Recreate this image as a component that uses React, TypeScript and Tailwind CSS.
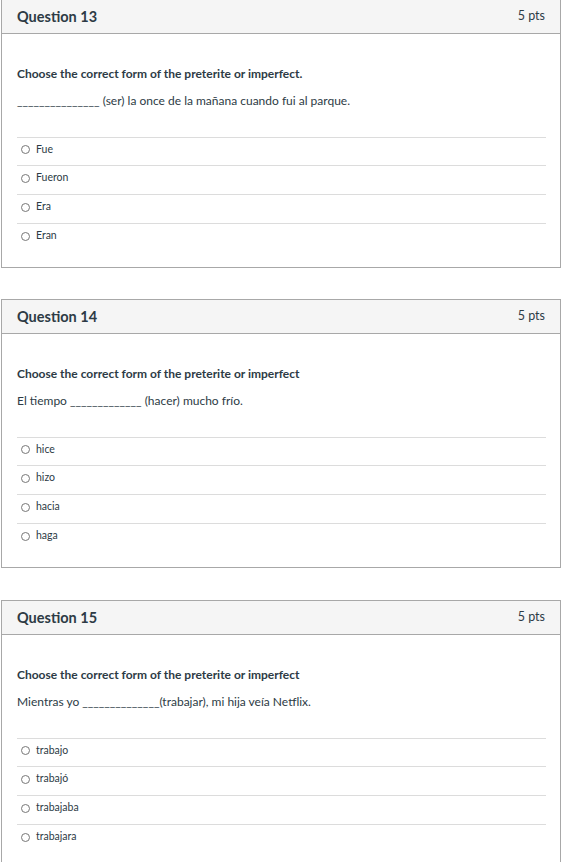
const QUESTIONS = [
  {
    num: 13,
    prompt: "Choose the correct form of the preterite or imperfect.",
    sentence: "_______________ (ser) la once de la mañana cuando fui al parque.",
    answers: ["Fue", "Fueron", "Era", "Eran"],
  },
  {
    num: 14,
    prompt: "Choose the correct form of the preterite or imperfect",
    sentence: "El tiempo _____________ (hacer) mucho frío.",
    answers: ["hice", "hizo", "hacia", "haga"],
  },
  {
    num: 15,
    prompt: "Choose the correct form of the preterite or imperfect",
    sentence: "Mientras yo ______________(trabajar), mi hija veía Netflix.",
    answers: ["trabajo", "trabajó", "trabajaba", "trabajara"],
  },
];

function Radio() {
  return (
    <span className="mr-[6px] ml-[4px] inline-block h-[9px] w-[9px] shrink-0 rounded-full border border-[#777]" />
  );
}

export default function App() {
  return (
    <div className="min-h-screen bg-white font-['Lato','Liberation_Sans',sans-serif] text-[#2d3b45]">
      <div className="-mt-px ml-px flex w-[560px] flex-col gap-[31px]">
        {QUESTIONS.map((q, qi) => (
          <div
            key={q.num}
            className={qi === 2 ? "mt-px border border-[#a8a8a8] bg-white" : "border border-[#a8a8a8] bg-white"}
          >
            <div className="flex h-[34px] items-center justify-between border-b border-[#a8a8a8] bg-[#f5f5f5] pl-[15px] pr-[15px]">
              <span className="text-[14.5px] font-bold">Question {q.num}</span>
              <span className="text-[12.5px]">5 pts</span>
            </div>
            <div className="pl-[15px] pr-[14px] pt-[31px] pb-[15px]">
              <p className="text-[12px] leading-[18px] font-bold">{q.prompt}</p>
              <p className="mt-[9px] text-[12px] leading-[18px]">{q.sentence}</p>
              <div className="mt-[27px]">
                {q.answers.map((a, i) => (
                  <div
                    key={a}
                    className={
                      i === 0
                        ? "flex h-[28px] items-center border-t border-[#dcdcdc] pb-[4px] text-[10.5px]"
                        : "flex h-[29px] items-center border-t border-[#dcdcdc] pb-[4px] text-[10.5px]"
                    }
                  >
                    <Radio />
                    <span>{a}</span>
                  </div>
                ))}
              </div>
            </div>
          </div>
        ))}
      </div>
    </div>
  );
}
